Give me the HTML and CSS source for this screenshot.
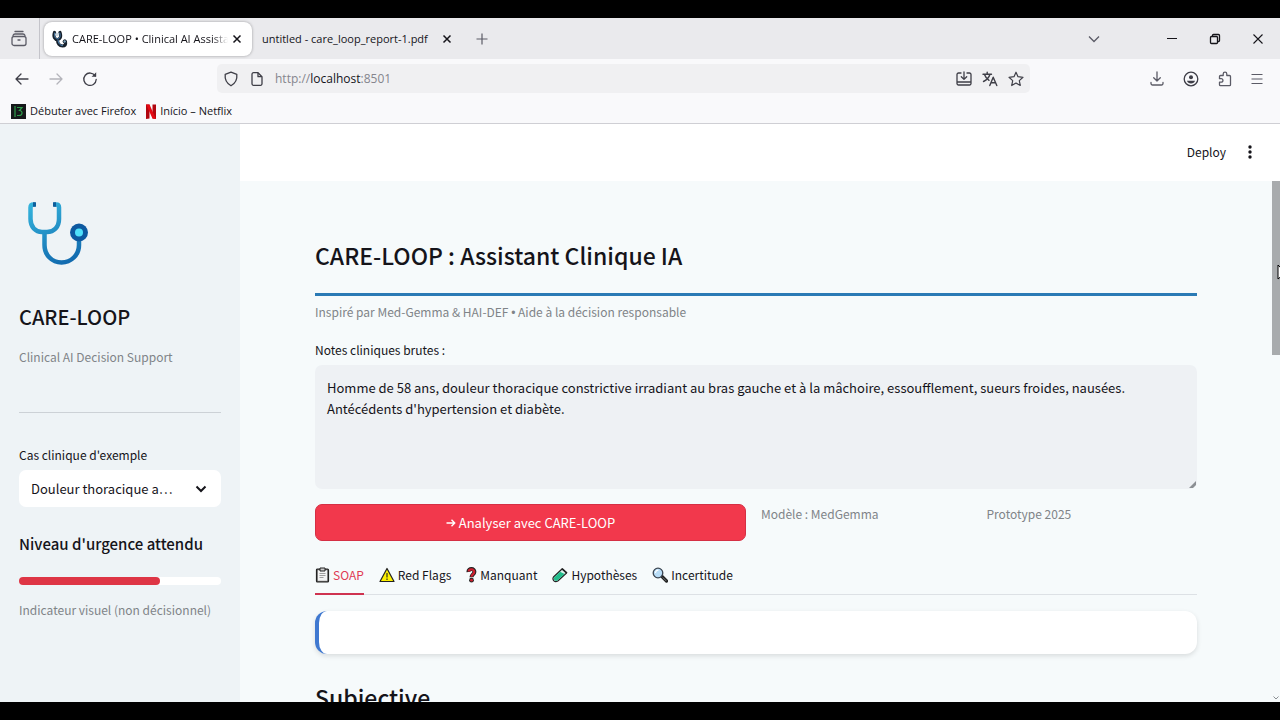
FILE: index.html
```html
<!DOCTYPE html>
<html lang="fr">
<head>
  <meta charset="UTF-8">
  <meta name="viewport" content="width=device-width, initial-scale=1.0">
  <title>CARE-LOOP • Clinical AI Assistant</title>
  <link rel="stylesheet" href="styles.css">
</head>
<body>
  <header class="browser">
    <div class="tabstrip">
      <button class="icon-button recent" aria-label="Onglets récents">
        <svg width="18" height="18" viewBox="0 0 18 18" fill="none" stroke="#5b5b66" stroke-width="1.3" stroke-linecap="round"><path d="M5 1.500h8"/><path d="M3 5.500q.5-1.500 2-1.500h8q1.500 0 2 1.500"/><rect x="2" y="6.500" width="14" height="9" rx="2"/><path d="M8 10h2"/></svg>
      </button>
      <div class="browser-tab active">
        <svg width="16" height="18" viewBox="0 0 16 18" fill="none" stroke-linecap="round"><path d="M2.500 2.500C1 7 3 9.500 5.500 9.500S9.500 7 8 2.500" stroke="#16202b" stroke-width="3.200"/><path d="M5.500 9.500c0 4 2 6.500 5 6.500 2.500 0 3.500-1.500 3-4" stroke="#16202b" stroke-width="3.200"/><path d="M2.800 3C2 7 3.500 8.800 5.500 8.800S8.800 7 7.800 3M6 10c.2 3.500 2 5.500 4.500 5.500" stroke="#4d86b8" stroke-width="1"/><circle cx="5" cy="4.500" r="1.800" fill="#c9d4dc"/><circle cx="12.800" cy="11.500" r="1.700" fill="#7da3bd" stroke="#16202b"/></svg>
        <span class="tab-title">CARE-LOOP • Clinical AI Assistant</span>
        <button class="icon-button close" aria-label="Fermer l'onglet">
          <svg width="10" height="10" viewBox="0 0 10 10" stroke="#15141a" stroke-width="1.500"><path d="M1.500 1.500l7 7M8.500 1.500l-7 7"/></svg>
        </button>
      </div>
      <div class="browser-tab">
        <span class="tab-title">untitled - care_loop_report-1.pdf</span>
        <button class="icon-button close" aria-label="Fermer l'onglet">
          <svg width="10" height="10" viewBox="0 0 10 10" stroke="#15141a" stroke-width="1.500"><path d="M1.500 1.500l7 7M8.500 1.500l-7 7"/></svg>
        </button>
      </div>
      <button class="icon-button new-tab" aria-label="Nouvel onglet">
        <svg width="12" height="12" viewBox="0 0 12 12" stroke="#5b5b66" stroke-width="1.200"><path d="M6 .5v11M.5 6h11"/></svg>
      </button>
      <div class="window-controls">
        <button class="icon-button" aria-label="Lister les onglets">
          <svg width="12" height="8" viewBox="0 0 12 8" fill="none" stroke="#5b5b66" stroke-width="1.300"><path d="M1 1.500l5 5 5-5"/></svg>
        </button>
        <button class="icon-button minimize" aria-label="Réduire">
          <svg width="12" height="12" viewBox="0 0 12 12" stroke="#15141a"><path d="M1 5.500h10"/></svg>
        </button>
        <button class="icon-button" aria-label="Restaurer">
          <svg width="12" height="12" viewBox="0 0 12 12" fill="none" stroke="#15141a" stroke-width="1.300"><rect x="1.500" y="3.500" width="7" height="7" rx="1"/><path d="M3.500 3.500v-1a1 1 0 0 1 1-1h5a1 1 0 0 1 1 1v5a1 1 0 0 1-1 1h-1"/></svg>
        </button>
        <button class="icon-button" aria-label="Fermer">
          <svg width="12" height="12" viewBox="0 0 12 12" stroke="#15141a" stroke-width="1.100"><path d="M1.500 1.500l9 9M10.500 1.500l-9 9"/></svg>
        </button>
      </div>
    </div>

    <div class="navbar">
      <div class="nav-left">
        <button class="icon-button" aria-label="Précédent">
          <svg width="16" height="16" viewBox="0 0 16 16" fill="none" stroke="#3e3e47" stroke-width="1.300" stroke-linecap="round" stroke-linejoin="round"><path d="M14 8H2M7 3L2 8l5 5"/></svg>
        </button>
        <button class="icon-button" aria-label="Suivant" disabled>
          <svg width="16" height="16" viewBox="0 0 16 16" fill="none" stroke="#b4b4ba" stroke-width="1.300" stroke-linecap="round" stroke-linejoin="round"><path d="M2 8h12M9 3l5 5-5 5"/></svg>
        </button>
        <button class="icon-button" aria-label="Actualiser">
          <svg width="16" height="16" viewBox="0 0 16 16" fill="none" stroke="#3e3e47" stroke-width="1.300" stroke-linecap="round"><path d="M13.300 5A6.200 6.200 0 1 0 14.200 8.500"/><path d="M14.200 1.200v4.600H9.600z" fill="#3e3e47" stroke="none"/></svg>
        </button>
      </div>
      <div class="urlbar">
        <svg width="16" height="16" viewBox="0 0 16 16" fill="none" stroke="#3e3e47" stroke-width="1.300" stroke-linejoin="round"><path d="M8 1.200l5.800 2.200c.6 5.200-1.600 9-5.800 11.400C3.800 12.400 1.600 8.600 2.200 3.400z"/></svg>
        <svg width="16" height="16" viewBox="0 0 16 16" fill="none" stroke="#3e3e47" stroke-width="1.300" stroke-linejoin="round"><path d="M9 1.700H4.500a1.500 1.500 0 0 0-1.500 1.500v9.600a1.500 1.500 0 0 0 1.500 1.500h7a1.500 1.500 0 0 0 1.500-1.500V5.700z"/><path d="M9 1.700v4h4"/></svg>
        <div class="url" role="textbox" aria-label="Adresse" contenteditable="true" spellcheck="false">http://<span class="host">localhost</span>:8501</div>
        <div class="url-actions">
          <button class="icon-button" aria-label="Installer">
            <svg width="16" height="16" viewBox="0 0 16 16" fill="none" stroke="#3e3e47" stroke-width="1.300" stroke-linecap="round" stroke-linejoin="round"><path d="M5 2H2.500A1.500 1.500 0 0 0 1 3.500v9A1.500 1.500 0 0 0 2.500 14h11a1.500 1.500 0 0 0 1.500-1.500v-9A1.500 1.500 0 0 0 13.500 2H11M1 11h14M8 1v7M5.300 5.700L8 8.400l2.700-2.700"/></svg>
          </button>
          <button class="icon-button" aria-label="Traduire">
            <svg width="16" height="16" viewBox="0 0 16 16" fill="none" stroke="#3e3e47" stroke-width="1.400" stroke-linecap="round" stroke-linejoin="round"><path d="M1 3.200h8.500M5.200 1.200v2M8 3.200C7 6.500 4.500 9 1.500 10.500M2.500 3.500C3.500 6.500 5 8 7 9.300M7.800 14.500l3.400-8.300 3.600 8.300M9 11.800h4.600"/></svg>
          </button>
          <button class="icon-button" aria-label="Marquer cette page">
            <svg width="16" height="16" viewBox="0 0 16 16" fill="none" stroke="#3e3e47" stroke-width="1.200" stroke-linejoin="round"><path d="M8 1.200l2 4.500 5 .6-3.700 3.300 1 4.900L8 12.100l-4.300 2.400 1-4.900L1 6.300l5-.6z"/></svg>
          </button>
        </div>
      </div>
      <div class="nav-right">
        <button class="icon-button" aria-label="Téléchargements">
          <svg width="16" height="16" viewBox="0 0 16 16" fill="none" stroke="#5b5b66" stroke-width="1.300" stroke-linecap="round" stroke-linejoin="round"><path d="M8 1v9M4.700 6.700L8 10l3.300-3.300M2 11.500v1A1.500 1.500 0 0 0 3.500 14h9a1.500 1.500 0 0 0 1.500-1.500v-1"/></svg>
        </button>
        <button class="icon-button" aria-label="Compte">
          <svg width="16" height="16" viewBox="0 0 16 16" fill="none" stroke="#3e3e47" stroke-width="1.300"><circle cx="8" cy="8" r="6.800"/><circle cx="8" cy="6.300" r="2" fill="#3e3e47" stroke="none"/><path d="M4 9.800h8c-.5 1.700-2 2.700-4 2.700s-3.500-1-4-2.700z" fill="#3e3e47" stroke="none"/></svg>
        </button>
        <button class="icon-button" aria-label="Extensions">
          <svg width="16" height="16" viewBox="0 0 16 16" fill="none" stroke="#5b5b66" stroke-width="1.300" stroke-linejoin="round"><path d="M2.500 7V5.500a1 1 0 0 1 1-1h2.700V3a1.800 1.800 0 0 1 3.600 0v1.500h2.700a1 1 0 0 1 1 1v8.200a1 1 0 0 1-1 1h-9a1 1 0 0 1-1-1v-2.500h1.700a1.700 1.700 0 0 0 0-3.500H2.500z"/></svg>
        </button>
        <button class="icon-button" aria-label="Menu">
          <svg width="12" height="12" viewBox="0 0 12 12" stroke="#5b5b66" stroke-width="1.200"><path d="M.5 1.500h11M.5 6h11M.5 10.500h11"/></svg>
        </button>
      </div>
    </div>

    <nav class="bookmarks">
      <a href="#">
        <svg width="15" height="15" viewBox="0 0 15 15"><rect width="15" height="15" fill="#16181a"/><path d="M4 2v11M6 3.500h5L8.500 6.500c3.500 0 3.500 5-.5 5H6" fill="none" stroke="#2f9e4c" stroke-width="1.200"/></svg>
        Débuter avec Firefox
      </a>
      <a href="#">
        <svg width="10" height="15" viewBox="0 0 10 15"><path d="M0 .5h3.500v14L0 15zM6.500.5H10V15l-3.500-.5z" fill="#b1060f"/><path d="M0 .5h3.500L10 15l-3.500-.5z" fill="#e50914"/></svg>
        Início – Netflix
      </a>
    </nav>
  </header>

  <div class="app">
    <aside class="sidebar">
      <svg class="logo" width="78" height="78" viewBox="0 0 78 78" fill="none">
        <defs>
          <linearGradient id="tube" x1="10" y1="5" x2="40" y2="70" gradientUnits="userSpaceOnUse">
            <stop offset="0" stop-color="#35b5dd"/>
            <stop offset="1" stop-color="#1169ae"/>
          </linearGradient>
        </defs>
        <path d="M16 6.500h-1.500q-3 0-3 3V21c0 8 5 13 11.500 13h5c7 0 12-5 12-13V9.500q0-3-3-3H35" stroke="url(#tube)" stroke-width="4.500"/>
        <path d="M25.500 35v12c0 10 7.500 17.500 17 17.500s17.500-7.500 17.500-17.500v-8" stroke="url(#tube)" stroke-width="4.500"/>
        <path d="M14 4.200h3v4.600h-3zM37 4.200h-3v4.600h3z" fill="#0f5e9c"/>
        <circle cx="60" cy="34.500" r="9" fill="#0d59a0"/>
        <circle cx="60" cy="34.500" r="4" fill="#4fe1fb"/>
      </svg>
      <h2 class="brand">CARE-LOOP</h2>
      <p class="caption">Clinical AI Decision Support</p>
      <hr>
      <label for="case">Cas clinique d'exemple</label>
      <div class="select">
        <select id="case">
          <option>Douleur thoracique a…</option>
        </select>
        <svg width="12" height="8" viewBox="0 0 12 8" fill="none" stroke="#15141a" stroke-width="2"><path d="M1.500 1.500L6 6l4.500-4.500"/></svg>
      </div>
      <h3 class="urgency" id="urgency">Niveau d'urgence attendu</h3>
      <progress value="70" max="100" aria-labelledby="urgency"></progress>
      <p class="caption">Indicateur visuel (non décisionnel)</p>
    </aside>

    <main class="main">
      <div class="toolbar">
        <button class="deploy">Deploy</button>
        <button class="icon-button" aria-label="Options">
          <svg width="4" height="14" viewBox="0 0 4 14" fill="#15141a"><circle cx="2" cy="2" r="1.700"/><circle cx="2" cy="7" r="1.700"/><circle cx="2" cy="12" r="1.700"/></svg>
        </button>
      </div>

      <div class="content">
        <h1>CARE-LOOP : Assistant Clinique IA</h1>
        <p class="caption">Inspiré par Med-Gemma &amp; HAI-DEF <span class="bullet">•</span> Aide à la décision responsable</p>

        <label for="notes">Notes cliniques brutes :</label>
        <div class="notes">
          <textarea id="notes" spellcheck="false">Homme de 58 ans, douleur thoracique constrictive irradiant au bras gauche et à la mâchoire, essoufflement, sueurs froides, nausées.
Antécédents d'hypertension et diabète.</textarea>
          <svg class="grip" width="7" height="7" viewBox="0 0 7 7"><path d="M7 0v4L4 7H0z" fill="#8b8f93"/></svg>
        </div>

        <div class="columns">
          <button class="analyse">
            <svg width="10" height="10" viewBox="0 0 10 10" fill="none" stroke="#fff" stroke-width="1.400"><path d="M.5 5h8M5.500 1.800L8.700 5 5.500 8.200"/></svg>
            Analyser avec CARE-LOOP
          </button>
          <p class="caption">Modèle : MedGemma</p>
          <p class="caption">Prototype 2025</p>
        </div>

        <div class="tabs" role="tablist">
          <button class="tab selected" role="tab" aria-selected="true">
            <svg width="15" height="16" viewBox="0 0 15 16"><rect x="1.500" y="2" width="12" height="13" rx="1" fill="#6a6a6a" stroke="#222" stroke-width="1.200"/><rect x="2.800" y="3.200" width="9.400" height="10.600" fill="#f3f3f3"/><path d="M5 1h5v3H5z" fill="#ccc" stroke="#222"/><path d="M4.500 6.500h6M4.500 8.500h6M4.500 10.500h4" stroke="#888" stroke-width=".8"/></svg>
            SOAP
          </button>
          <button class="tab" role="tab">
            <svg width="16" height="16" viewBox="0 0 16 16"><path d="M8 1.500L15 14.500H1z" fill="#fdf000" stroke="#222" stroke-width="1.200" stroke-linejoin="round"/><path d="M8 6v4.500M8 11.500V13" stroke="#222" stroke-width="1.100"/></svg>
            Red Flags
          </button>
          <button class="tab" role="tab">
            <svg width="11" height="16" viewBox="0 0 11 16" fill="none"><path d="M2.500 5C2 1 9 1 8.300 5.200 8 7.500 5.500 7.500 5.500 10.300" stroke="#222" stroke-width="4"/><circle cx="5.500" cy="13.200" r="2.400" fill="#222"/><path d="M2.700 4.500C3 1.500 8.600 1.700 8.200 5.200 8 7.300 5.500 7.500 5.500 9.800" stroke="#cf2130" stroke-width="2.200"/><circle cx="5.500" cy="13.200" r="1.400" fill="#cf2130"/></svg>
            Manquant
          </button>
          <button class="tab" role="tab">
            <svg width="16" height="16" viewBox="0 0 16 16" stroke="#222" stroke-linejoin="round"><path d="M10 2l4.500 4-8.700 8c-3 2-6-1-4.300-4z" fill="#dff3ee" stroke-width="1.200"/><path d="M8 4.800l4.700 2.200-7.300 6.600c-2.300 1.200-4.400-1-3.300-3z" fill="#22bd8c" stroke="none"/><path d="M10 1.500l5 4.500" stroke-width="1.500"/></svg>
            Hypothèses
          </button>
          <button class="tab" role="tab">
            <svg width="16" height="16" viewBox="0 0 16 16" fill="none" stroke-linecap="round"><path d="M10 9.500l4.500 4.500" stroke="#222" stroke-width="3.200"/><path d="M11 10.700l3 3" stroke="#777" stroke-width="1"/><circle cx="6" cy="6" r="4.800" fill="#b8dcf6" stroke="#3a4450" stroke-width="1.300"/><path d="M3.500 5.500A3 3 0 0 1 6 3.200" stroke="#fff" stroke-width="1.200"/></svg>
            Incertitude
          </button>
        </div>

        <div class="card"></div>
        <h2 class="section">Subjective</h2>
      </div>

      <div class="scroll-thumb"></div>
      <svg class="scroll-down" width="6" height="4" viewBox="0 0 6 4" fill="none" stroke="#8b8f93"><path d="M.5.500L3 3 5.500.500"/></svg>
      <svg class="pointer" width="12" height="18" viewBox="0 0 12 18"><path d="M1 1v14l3.500-3 2 5 2-1-2-4.500H11z" fill="#fff" stroke="#000" stroke-width="1"/></svg>
    </main>
  </div>
</body>
</html>
```

FILE: styles.css
```css
* {
  box-sizing: border-box;
}
body {
  margin: 0;
  height: 100vh;
  padding: 18px 0;
  display: flex;
  flex-direction: column;
  overflow: hidden;
  background: #000;
  color: #15141a;
  font-family: "Noto Sans CJK SC", "Noto Sans", sans-serif;
  font-size: 12px;
  line-height: 20px;
}
h1, h2, h3, p {
  margin: 0;
}
button, select, textarea {
  font: inherit;
  color: inherit;
  border: none;
  background: none;
  padding: 0;
  margin: 0;
}
svg {
  display: block;
  flex-shrink: 0;
}
.icon-button {
  display: flex;
  align-items: center;
  justify-content: center;
}

/* browser window */
.browser {
  background: #f9f9fb;
  border-bottom: 1px solid #cfcfd4;
  font-family: "Open Sans", "Noto Sans", sans-serif;
  font-size: 11px;
}
.tabstrip {
  display: flex;
  align-items: center;
  height: 41px;
  background: #eaeaed;
}
.recent {
  width: 40px;
  height: 41px;
  padding-right: 2px;
  border-right: 1px solid #c4c4ca;
}
.browser-tab {
  display: flex;
  align-items: center;
  gap: 4px;
  width: 208px;
  height: 34px;
  padding: 0 8px 0 10px;
  border-radius: 8px;
}
.browser-tab.active {
  margin-left: 4px;
  padding: 0 10px 0 8px;
  background: #fff;
  box-shadow: 0 0 3px rgba(0, 0, 0, 0.35);
}
.tab-title {
  flex: 1;
  overflow: hidden;
  white-space: nowrap;
}
.active .tab-title {
  mask-image: linear-gradient(to right, #000 90%, transparent);
}
.new-tab {
  margin-left: 16px;
}
.window-controls {
  display: flex;
  align-items: center;
  gap: 31px;
  margin-left: auto;
  padding-right: 16px;
}
.minimize {
  margin-left: 35px;
}
.navbar {
  display: flex;
  align-items: center;
  height: 39px;
}
.nav-left {
  display: flex;
  gap: 18px;
  width: 217px;
  padding-left: 14px;
}
.urlbar {
  display: flex;
  align-items: center;
  gap: 10px;
  flex: 1;
  height: 29px;
  padding: 0 6px;
  border-radius: 5px;
  background: #f0f0f2;
}
.url {
  font-size: 12px;
  color: #85858d;
}
.host {
  color: #15141a;
}
.url-actions {
  display: flex;
  gap: 10px;
  margin-left: auto;
}
.nav-right {
  display: flex;
  justify-content: flex-end;
  gap: 18px;
  width: 250px;
  padding-right: 17px;
}
.bookmarks {
  display: flex;
  gap: 10px;
  height: 25px;
  padding: 3px 11px 0;
}
.bookmarks a {
  display: flex;
  align-items: center;
  gap: 4px;
  height: 20px;
  color: inherit;
  text-decoration: none;
}

/* streamlit page */
.app {
  display: flex;
  flex: 1;
  min-height: 0;
  background: #f6fafb;
}
.sidebar {
  width: 240px;
  padding: 74px 19px 0;
  background: #eef3f6;
}
.logo {
  margin-bottom: 27px;
}
.brand {
  font-size: 20px;
  font-weight: 500;
  line-height: 28px;
}
.caption {
  color: #808488;
}
.brand + .caption {
  margin-top: 16px;
}
.sidebar hr {
  height: 1px;
  margin: 45px 0 32px;
  border: none;
  background: #ccd1d6;
}
label {
  display: block;
}
.select {
  position: relative;
  margin-top: 5px;
}
.select select {
  appearance: none;
  width: 100%;
  height: 37px;
  padding: 0 12px;
  border-radius: 7px;
  background: #fff;
  font-size: 13px;
}
.select svg {
  position: absolute;
  right: 14px;
  top: 15px;
  pointer-events: none;
}
.urgency {
  margin: 25px 0 21px;
  font-size: 15px;
  font-weight: 500;
  line-height: 24px;
}
progress {
  appearance: none;
  display: block;
  width: 100%;
  height: 8px;
  margin-bottom: 15px;
}
progress::-webkit-progress-bar {
  border-radius: 4px;
  background: #fff;
}
progress::-webkit-progress-value {
  border-radius: 4px;
  background: #de3545;
}
.main {
  position: relative;
  flex: 1;
  min-width: 0;
  overflow: hidden;
}
.toolbar {
  display: flex;
  align-items: center;
  justify-content: flex-end;
  gap: 22px;
  height: 57px;
  padding: 0 28px 1px 0;
  background: #fff;
}
.content {
  padding: 55px 83px 0 75px;
}
h1 {
  padding-bottom: 19px;
  border-bottom: 3px solid #2a7ab5;
  font-size: 23px;
  font-weight: 500;
  line-height: 38px;
}
h1 + .caption {
  margin: 6px 0 17px;
}
.bullet {
  font-family: "Liberation Sans", sans-serif;
}
.notes {
  position: relative;
  margin-top: 5px;
}
.notes textarea {
  display: block;
  width: 100%;
  height: 124px;
  padding: 12px;
  border-radius: 7px;
  background: #eef1f4;
  font-size: 13px;
  line-height: 21px;
  resize: none;
}
.grip {
  position: absolute;
  right: 1px;
  bottom: 1px;
}
.columns {
  display: flex;
  gap: 15px;
  margin-top: 15px;
}
.columns .caption {
  flex: 1 1 calc(25% - 15px);
}
.analyse {
  display: flex;
  align-items: center;
  justify-content: center;
  gap: 3px;
  flex: 1 1 calc(50% - 15px);
  height: 37px;
  border: 1px solid #d52f44;
  border-radius: 7px;
  background: #f2384c;
  color: #fff;
  font-size: 13px;
}
.tabs {
  display: flex;
  gap: 15px;
  margin-top: 16px;
  border-bottom: 1px solid #dde1e5;
}
.tab {
  display: flex;
  align-items: center;
  gap: 3px;
  height: 38px;
  margin-bottom: -1px;
  border-bottom: 2px solid transparent;
}
.tab.selected {
  border-bottom-color: #cf3350;
  color: #e03a54;
}
.card {
  height: 43px;
  margin-top: 16px;
  border-left: 4px solid #3f78d0;
  border-radius: 12px;
  background: #fff;
  box-shadow: 0 2px 5px rgba(0, 0, 0, 0.12);
}
.section {
  margin-top: 25px;
  font-size: 23px;
  font-weight: 500;
  line-height: 36px;
}
.scroll-thumb {
  position: absolute;
  right: 0;
  top: 57px;
  width: 8px;
  height: 174px;
  background: #a8abad;
}
.scroll-down {
  position: absolute;
  right: 1px;
  bottom: 2px;
}
.pointer {
  position: absolute;
  right: -9px;
  top: 140px;
}
```
